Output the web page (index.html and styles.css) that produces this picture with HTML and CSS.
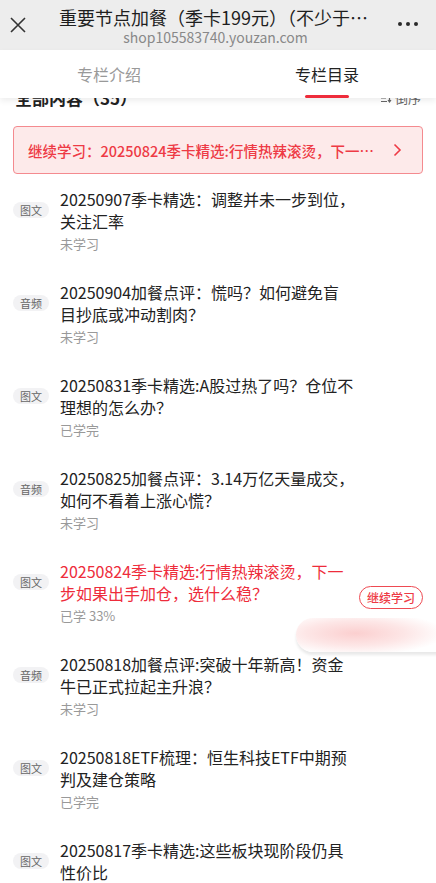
FILE: index.html
```html
<!DOCTYPE html>
<html lang="zh-CN">
<head>
    <meta charset="UTF-8">
    <meta name="viewport" content="width=device-width, initial-scale=1.0">
    <title>重要节点加餐</title>
    <link rel="stylesheet" href="styles.css">
</head>
<body>

    <div class="topbar">
        <div class="topbar-close">
            <svg width="18" height="18" viewBox="0 0 18 18"><path d="M2 2 L16 16 M16 2 L2 16" stroke="#333" stroke-width="1.6" fill="none"/></svg>
        </div>
        <div class="topbar-title">
            <div class="title">重要节点加餐（季卡199元）（不少于20篇）</div>
            <div class="url">shop105583740.youzan.com</div>
        </div>
        <div class="topbar-more">
            <span></span><span></span><span></span>
        </div>
    </div>

    <div class="tabs">
        <div class="tab">专栏介绍</div>
        <div class="tab active">专栏目录</div>
    </div>

    <div class="content">
        <div class="list-head">
            <span class="list-count">全部内容（35）</span>
            <span class="list-sort">
                <svg width="11" height="10" viewBox="0 0 11 10"><path d="M0 1.5h6M0 5h5M0 8.5h6M8.5 1v8M7 7l1.5 2 1.5-2" stroke="#666" stroke-width="1.2" fill="none"/></svg>
                倒序
            </span>
        </div>

        <div class="continue-bar">
            <span class="continue-text">继续学习：20250824季卡精选:行情热辣滚烫，下一步如果出手加仓，选什么稳？</span>
            <svg width="10" height="14" viewBox="0 0 10 14"><path d="M2.5 1.5 L8 7 L2.5 12.5" stroke="#ee3a45" stroke-width="1.6" fill="none"/></svg>
        </div>

        <div class="item">
            <span class="item-tag">图文</span>
            <div class="item-body">
                <div class="item-title">20250907季卡精选：调整并未一步到位，<br>关注汇率</div>
                <div class="item-status">未学习</div>
            </div>
        </div>

        <div class="item">
            <span class="item-tag">音频</span>
            <div class="item-body">
                <div class="item-title">20250904加餐点评：慌吗？如何避免盲<br>目抄底或冲动割肉？</div>
                <div class="item-status">未学习</div>
            </div>
        </div>

        <div class="item">
            <span class="item-tag">图文</span>
            <div class="item-body">
                <div class="item-title">20250831季卡精选:A股过热了吗？仓位不<br>理想的怎么办？</div>
                <div class="item-status">已学完</div>
            </div>
        </div>

        <div class="item">
            <span class="item-tag">音频</span>
            <div class="item-body">
                <div class="item-title">20250825加餐点评：3.14万亿天量成交，<br>如何不看着上涨心慌？</div>
                <div class="item-status">未学习</div>
            </div>
        </div>

        <div class="item current">
            <span class="item-tag">图文</span>
            <div class="item-body">
                <div class="item-title">20250824季卡精选:行情热辣滚烫，下一<br>步如果出手加仓，选什么稳？</div>
                <div class="item-status">已学 33%</div>
            </div>
            <span class="item-btn">继续学习</span>
        </div>

        <div class="item">
            <span class="item-tag">音频</span>
            <div class="item-body">
                <div class="item-title">20250818加餐点评:突破十年新高！资金<br>牛已正式拉起主升浪？</div>
                <div class="item-status">未学习</div>
            </div>
        </div>

        <div class="item">
            <span class="item-tag">图文</span>
            <div class="item-body">
                <div class="item-title">20250818ETF梳理：恒生科技ETF中期预<br>判及建仓策略</div>
                <div class="item-status">已学完</div>
            </div>
        </div>

        <div class="item">
            <span class="item-tag">图文</span>
            <div class="item-body">
                <div class="item-title">20250817季卡精选:这些板块现阶段仍具<br>性价比</div>
                <div class="item-status">未学习</div>
            </div>
        </div>
    </div>

    <!-- floating pill, half off the screen -->
    <div class="float-pill"></div>

</body>
</html>
```

FILE: styles.css
```css
body {
    margin: 0;
    font-family: "Noto Sans CJK SC", "Noto Sans", sans-serif;
    color: #222;
    background: #fff;
    height: 883px;
    overflow: hidden;
    position: relative;
}
.topbar {
    height: 50px;
    background: #ededed;
    display: flex;
    align-items: flex-start;
}
.topbar-close {
    width: 36px;
    padding: 15px 0 0 9px;
    box-sizing: border-box;
}
.topbar-title {
    flex: 1;
    min-width: 0;
    text-align: center;
    padding: 6px 14px 0 23px;
}
.title {
    font-size: 18px;
    line-height: 22px;
    white-space: nowrap;
    overflow: hidden;
    text-overflow: ellipsis;
    color: #1e1e1e;
}
.url {
    margin-top: 1px;
    font-size: 14px;
    line-height: 16px;
    color: #888;
}
.topbar-more {
    width: 50px;
    display: flex;
    gap: 4px;
    padding: 22px 0 0 12px;
    box-sizing: border-box;
}
.topbar-more span {
    width: 4px;
    height: 4px;
    border-radius: 50%;
    background: #2a2a2a;
}
.tabs {
    height: 48px;
    display: flex;
    background: #fff;
    position: relative;
    z-index: 2;
    box-shadow: 0 3px 6px rgba(0, 0, 0, 0.07);
}
.tab {
    flex: 1;
    text-align: center;
    font-size: 16px;
    line-height: 48px;
    color: #999;
    position: relative;
}
.tab.active {
    color: #222;
}
.tab.active::after {
    content: "";
    position: absolute;
    left: 50%;
    bottom: 0;
    width: 44px;
    height: 3px;
    margin-left: -22px;
    border-radius: 2px;
    background: #ee2c3b;
}
.content {
    margin-top: -12px;
    padding: 0 13px 0 13px;
}
.list-head {
    display: flex;
    justify-content: space-between;
    align-items: center;
    line-height: 24px;
    padding-left: 2px;
}
.list-count {
    font-size: 17px;
    font-weight: bold;
}
.list-sort {
    font-size: 13px;
    color: #666;
    display: flex;
    align-items: center;
    gap: 3px;
    margin-right: 2px;
}
.continue-bar {
    margin-top: 16px;
    height: 48px;
    box-sizing: border-box;
    border: 1px solid #f48a8f;
    border-radius: 4px;
    background: #fdeaea;
    display: flex;
    align-items: center;
    padding: 0 20px 0 14px;
    gap: 16px;
}
.continue-text {
    flex: 1;
    min-width: 0;
    font-size: 14.5px;
    font-weight: 500;
    color: #ee3a45;
    white-space: nowrap;
    overflow: hidden;
    text-overflow: ellipsis;
}
.item {
    display: flex;
    align-items: flex-start;
    padding: 14px 0 14px 0;
}
.item-tag {
    width: 36px;
    height: 16px;
    margin-top: 14px;
    margin-right: 11px;
    border-radius: 8px;
    background: #f2f2f4;
    color: #666;
    font-size: 11px;
    line-height: 16px;
    text-align: center;
    flex-shrink: 0;
}
.item-body {
    flex: 1;
}
.item-title {
    font-size: 16px;
    line-height: 22px;
    color: #222;
}
.item-status {
    margin-top: 3px;
    font-size: 13px;
    line-height: 18px;
    color: #999;
}
.item.current .item-title {
    color: #ee2c3b;
}
.item-btn {
    align-self: center;
    margin-top: 10px;
    height: 23px;
    padding: 0 7px;
    border: 1px solid #ee4a52;
    border-radius: 12px;
    box-sizing: border-box;
    font-size: 12px;
    line-height: 21px;
    font-weight: 500;
    color: #ee3a45;
    flex-shrink: 0;
}
.float-pill {
    position: absolute;
    top: 618px;
    left: 296px;
    width: 170px;
    height: 34px;
    border-radius: 17px;
    background: radial-gradient(ellipse 90px 22px at 35% 45%, #fbcfcf, #fde6e6 55%, #fff 100%);
    box-shadow: 0 3px 3px rgba(0, 0, 0, 0.09);
}
```
